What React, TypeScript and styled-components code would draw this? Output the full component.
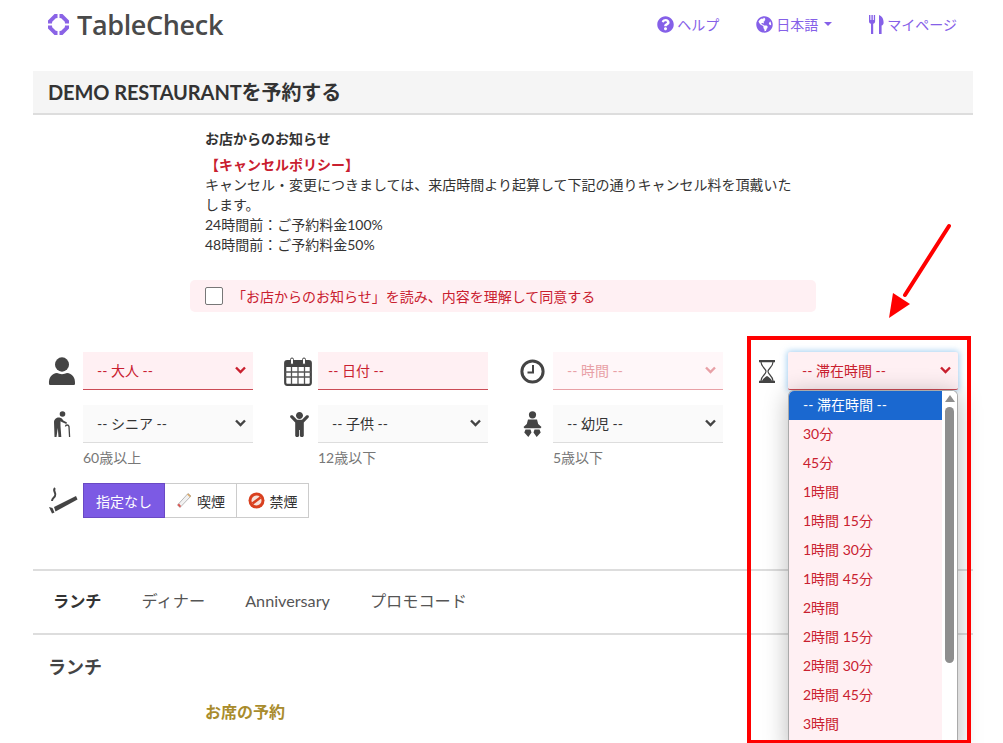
import React from 'react'
import styled, { createGlobalStyle } from 'styled-components'
import { FaQuestionCircle, FaGlobeAmericas, FaChild } from 'react-icons/fa'

const GlobalStyle = createGlobalStyle`
  html, body {
    margin: 0;
    padding: 0;
    height: 743px;
    overflow: hidden;
    background: #fff;
    font-family: Lato, "Noto Sans CJK JP", sans-serif;
    font-size: 14px;
    color: #333;
  }
`

const purple = '#8560e8'
const red = '#c9202f'

const Page = styled.div`
  position: relative;
  width: 1003px;
  height: 743px;
  overflow: hidden;
`

const Header = styled.header`
  display: flex;
  align-items: center;
  justify-content: space-between;
  height: 48px;
  padding: 0 46px 0 47px;
  margin-bottom: 23px;
`

const Logo = styled.div`
  display: flex;
  align-items: center;
  gap: 7px;
  font-family: "Open Sans", sans-serif;
  font-size: 27px;
  font-weight: 600;
  letter-spacing: -0.35px;
  color: #4a4a4a;
`

const Nav = styled.nav`
  display: flex;
  align-items: center;
  gap: 37px;
`

const NavLink = styled.a`
  display: flex;
  align-items: center;
  gap: 3px;
  font-size: 14px;
  color: ${purple};
`

const Caret = styled.span`
  width: 0;
  height: 0;
  margin-left: 3px;
  border-left: 4px solid transparent;
  border-right: 4px solid transparent;
  border-top: 4px solid ${purple};
`

const Main = styled.main`
  margin: 0 30px 0 33px;
`

const Title = styled.h1`
  margin: 0;
  height: 42px;
  padding-left: 15px;
  line-height: 42px;
  font-size: 20px;
  font-weight: 700;
  color: #333;
  background: #f5f5f5;
  border-bottom: 2px solid #ddd;
  letter-spacing: -0.1px;
`

const Notice = styled.section`
  width: 595px;
  margin-left: 172px;
  padding-top: 14px;
  line-height: 20px;
`

const NoticeTitle = styled.div`
  font-weight: 700;
  margin-bottom: 6px;
`

const NoticeRed = styled.div`
  font-weight: 700;
  color: ${red};
`

const Consent = styled.label`
  display: flex;
  align-items: center;
  gap: 9px;
  width: 611px;
  height: 32px;
  margin: 25px 0 0 157px;
  padding-left: 15px;
  background: #fff0f3;
  border-radius: 5px;
  color: ${red};
`

const CheckBox = styled.span`
  width: 16px;
  height: 16px;
  background: #fff;
  border: 1px solid #777;
  border-radius: 2px;
`

const Form = styled.div`
  display: grid;
  grid-template-columns: repeat(4, 205px);
  column-gap: 30px;
  row-gap: 15px;
  margin: 40px 0 0 15px;
`

const Field = styled.div`
  position: relative;
  display: grid;
  grid-template-columns: 35px 170px;
`

const FieldIcon = styled.div<{ $indent?: number }>`
  display: flex;
  align-items: center;
  justify-content: flex-start;
  height: 38px;
  padding-left: ${({ $indent }) => $indent ?? 0}px;
  color: #444;
`

const Select = styled.div<{ $state?: 'error' | 'faded' | 'focus'; $inset?: number }>`
  display: flex;
  align-items: center;
  justify-content: space-between;
  box-sizing: border-box;
  height: 38px;
  padding: 0 7px 2px ${({ $inset }) => $inset ?? 14}px;
  background: ${({ $state }) =>
    $state === 'faded' ? '#fff7f9' : $state ? '#fff0f3' : '#fafafa'};
  border-bottom: 1px solid
    ${({ $state }) =>
      $state === 'faded' ? '#e8a0a6' : $state ? '#cb4b55' : '#ddd'};
  color: ${({ $state }) =>
    $state === 'faded' ? '#e8a0a6' : $state ? red : '#333'};
  box-shadow: ${({ $state }) =>
    $state === 'focus' ? '0 0 6px 1px rgba(102, 175, 233, 0.6)' : 'none'};
  border-radius: ${({ $state }) => ($state === 'focus' ? '2px' : '0')};
`

const Note = styled.div`
  grid-column: 2;
  margin-top: 5px;
  line-height: 20px;
  color: #777;
`

const SmokingRow = styled.div`
  display: flex;
  align-items: center;
  margin: 15px 0 0 15px;
`

const SmokingIcon = styled.div`
  width: 35px;
  height: 35px;
  display: flex;
  align-items: center;
`

const SmokingButton = styled.div<{ $active?: boolean }>`
  display: flex;
  align-items: center;
  justify-content: center;
  gap: 5px;
  box-sizing: border-box;
  height: 35px;
  width: ${({ $active }) => ($active ? '82px' : '73px')};
  margin-left: ${({ $active }) => ($active ? '0' : '-1px')};
  border: 1px solid ${({ $active }) => ($active ? '#6a49c4' : '#ccc')};
  background: ${({ $active }) => ($active ? '#7c5ae4' : '#fff')};
  color: ${({ $active }) => ($active ? '#fff' : '#333')};
  position: relative;
  z-index: ${({ $active }) => ($active ? 1 : 0)};
`

const Tabs = styled.div`
  display: flex;
  align-items: center;
  gap: 40px;
  box-sizing: content-box;
  height: 58px;
  margin-top: 51px;
  padding: 0 0 4px 20px;
  border-top: 2px solid #ddd;
  border-bottom: 2px solid #ddd;
  font-size: 16.2px;
`

const Tab = styled.span<{ $active?: boolean }>`
  font-weight: ${({ $active }) => ($active ? 700 : 400)};
  color: ${({ $active }) => ($active ? '#333' : '#555')};
`

const SectionName = styled.h2`
  margin: 21px 0 0 15px;
  line-height: 22px;
  font-size: 18px;
  font-weight: 700;
  color: #444;
`

const SeatHeading = styled.h3`
  margin: 23px 0 0 172px;
  line-height: 22px;
  font-size: 16px;
  font-weight: 700;
  color: #a98c2d;
`

const Dropdown = styled.div`
  position: absolute;
  top: 38px;
  left: 35px;
  z-index: 5;
  display: flex;
  box-sizing: border-box;
  width: 170px;
  height: 360px;
  overflow: hidden;
  background: #fff;
  border: 1px solid #aaa;
  border-bottom: 0;
  border-radius: 6px 6px 0 0;
  box-shadow: 0 4px 24px rgba(0, 0, 0, 0.28);
`

const OptionList = styled.ul`
  flex: 1;
  margin: 0;
  padding: 0;
  list-style: none;
  background: #fff0f3;
`

const Option = styled.li<{ $selected?: boolean }>`
  height: 29px;
  padding-left: 14px;
  line-height: 28px;
  color: ${({ $selected }) => ($selected ? '#fff' : red)};
  background: ${({ $selected }) => ($selected ? '#1a68d0' : 'transparent')};
`

const ScrollTrack = styled.div`
  display: flex;
  flex-direction: column;
  align-items: center;
  width: 15px;
  padding-top: 4px;
  background: #fff;
`

const ScrollArrow = styled.span`
  width: 0;
  height: 0;
  border-left: 5px solid transparent;
  border-right: 5px solid transparent;
  border-bottom: 7px solid #8e8e8e;
`

const ScrollThumb = styled.div`
  width: 9px;
  height: 256px;
  margin-top: 5px;
  border-radius: 5px;
  background: #8e8e8e;
`

const RedFrame = styled.div`
  position: absolute;
  top: 336px;
  left: 747px;
  z-index: 6;
  box-sizing: border-box;
  width: 224px;
  height: 408px;
  border: 4px solid #f00;
  pointer-events: none;
`

const ArrowOverlay = styled.svg`
  position: absolute;
  top: 220px;
  left: 885px;
  z-index: 6;
`

const Chevron = ({ color }: { color: string }) => (
  <svg width="11" height="8" viewBox="0 0 11 8">
    <path d="M1 1.500l4.500 4.500L10 1.500" fill="none" stroke={color} strokeWidth="2.400" />
  </svg>
)

const LogoMark = () => (
  <svg width="23" height="23" viewBox="0 0 23 23" fill="#8a63e6">
    <path d="M7.500 1L10.500 1V5L8.800 5.200L5.200 8.800L5 10.500H1V7.500Z" />
    <path d="M15.500 1L12.500 1V5L14.200 5.200L17.800 8.800L18 10.500H22V7.500Z" />
    <path d="M7.500 22L10.500 22V18L8.800 17.800L5.200 14.200L5 12.500H1V15.500Z" />
    <path d="M15.500 22L12.500 22V18L14.200 17.800L17.800 14.200L18 12.500H22V15.500Z" />
  </svg>
)

const CutleryIcon = () => (
  <svg width="15" height="19" viewBox="0 0 15 19" fill={purple}>
    <path d="M0 0h1.400v5h1V0h1.400v5h1V0h1.300v6.500c0 1.200-.8 2-1.900 2.300V19H2V8.800C.8 8.500 0 7.700 0 6.500z" />
    <path d="M10 19V0c2.600.8 4.600 3.600 4.600 7.500 0 1.700-.8 2.800-2 3V19z" />
  </svg>
)

const PersonIcon = () => (
  <svg width="28" height="28" viewBox="0 0 28 28" fill="#444">
    <ellipse cx="14" cy="7.500" rx="7" ry="7.200" />
    <path d="M1 27c-.6-6.500 3-10.500 8-11 3 1.500 7 1.500 10 0 5 .5 8.600 4.500 8 11-.1.6-.5 1-1 1H2c-.5 0-.9-.4-1-1z" />
  </svg>
)

const CalendarIcon = () => (
  <svg width="28" height="29" viewBox="0 0 28 29">
    <rect x="1.200" y="4" width="25.600" height="23.800" rx="2" fill="#fff" stroke="#444" strokeWidth="2.200" />
    <rect x="1" y="4" width="26" height="6" fill="#444" />
    <rect x="6.500" y="1" width="3" height="6.500" rx="1.500" fill="#fff" stroke="#444" />
    <rect x="18.500" y="1" width="3" height="6.500" rx="1.500" fill="#fff" stroke="#444" />
    <path d="M1 15h26M1 20h26M7.500 10v17M14 10v17M20.500 10v17" stroke="#555" strokeWidth="1.300" />
  </svg>
)

const ClockIcon = () => (
  <svg width="25" height="25" viewBox="0 0 25 25">
    <circle cx="12.500" cy="12.500" r="10.600" fill="#fff" stroke="#444" strokeWidth="3" />
    <path d="M13 6v7.500H7.500" fill="none" stroke="#444" strokeWidth="2" />
  </svg>
)

const HourglassIcon = () => (
  <svg width="18" height="23" viewBox="0 0 18 23">
    <path d="M1 1.200h16M1 21.800h16" stroke="#444" strokeWidth="2.200" />
    <path d="M3 2c0 5 5 6.500 5 9.500S3 16 3 21M15 2c0 5-5 6.500-5 9.500S15 16 15 21" fill="none" stroke="#444" strokeWidth="1.200" />
    <path d="M4 21c.8-2.500 3.500-4 5-5 1.500 1 4.200 2.500 5 5z" fill="#444" />
  </svg>
)

const SeniorIcon = () => (
  <svg width="19" height="27" viewBox="0 0 19 27" fill="#444">
    <circle cx="9.500" cy="3" r="2.800" />
    <path d="M1 11c0-3 3-5 5.500-4.500 2 .3 3 1.500 3.800 3l3.700 2-.7 1.500-4.500-2-1.300-.8V15l.8 11H5.500l-.7-9-1.300 9H1.500z" />
    <path d="M12.500 15.500c0-2 3-2 3.500 0L16.600 26" fill="none" stroke="#444" strokeWidth="1.300" />
  </svg>
)

const BabyIcon = () => (
  <svg width="19" height="27" viewBox="0 0 19 27" fill="#444">
    <circle cx="9.500" cy="3.800" r="3.600" />
    <path d="M5 8.500h9l1.200 4.500 3.300 3-1 1.300H1.500l-1-1.300 3.300-3z" />
    <path d="M2.500 18.500h5l1 3-3.200 4.500-4-4.500zM16.500 18.500h-5l-1 3 3.200 4.500 4-4.500z" />
  </svg>
)

const CigaretteIcon = () => (
  <svg width="30" height="27" viewBox="0 0 30 27">
    <path d="M7 1c-3 3 2 5 0 8-1 2-3 2-3 5" fill="none" stroke="#444" strokeWidth="2" />
    <path d="M6 20L28 9l1.500 3.500L7.500 24.500z" fill="#444" />
    <path d="M1 20l3.500 1 2 4.500-2.500 1z" fill="#444" />
  </svg>
)

const SmokingEmoji = () => (
  <svg width="16" height="17" viewBox="0 0 16 17">
    <path d="M1.500 13L12 1.500l3 2.500L4 15.500z" fill="#f2f2f2" stroke="#b9b9b9" />
    <path d="M11 2.500l1-1 3 2.500-1 1.200z" fill="#d9a869" />
    <path d="M1.500 13L3 11.500 5 14l-1 1.500z" fill="#d9534f" />
  </svg>
)

const NoEmoji = () => (
  <svg width="17" height="17" viewBox="0 0 17 17">
    <circle cx="8.500" cy="8.500" r="8" fill="#d9401f" />
    <circle cx="8.500" cy="8.500" r="5" fill="#f6e3dc" />
    <path d="M4.500 11.500l8-6" stroke="#d9401f" strokeWidth="2.500" />
  </svg>
)

const durations = [
  '-- 滞在時間 --',
  '30分',
  '45分',
  '1時間',
  '1時間 15分',
  '1時間 30分',
  '1時間 45分',
  '2時間',
  '2時間 15分',
  '2時間 30分',
  '2時間 45分',
  '3時間',
]

export default function App() {
  return (
    <Page>
      <GlobalStyle />
      <Header>
        <Logo>
          <LogoMark />
          TableCheck
        </Logo>
        <Nav>
          <NavLink>
            <FaQuestionCircle size={17} />
            ヘルプ
          </NavLink>
          <NavLink>
            <FaGlobeAmericas size={17} />
            日本語
            <Caret />
          </NavLink>
          <NavLink>
            <CutleryIcon />
            マイページ
          </NavLink>
        </Nav>
      </Header>

      <Main>
        <Title>DEMO RESTAURANTを予約する</Title>
        <Notice>
          <NoticeTitle>お店からのお知らせ</NoticeTitle>
          <NoticeRed>【キャンセルポリシー】</NoticeRed>
          キャンセル・変更につきましては、来店時間より起算して下記の通りキャンセル料を頂戴いたします。
          <br />
          24時間前：ご予約料金100%
          <br />
          48時間前：ご予約料金50%
        </Notice>
        <Consent>
          <CheckBox />
          「お店からのお知らせ」を読み、内容を理解して同意する
        </Consent>

        <Form>
          <Field>
            <FieldIcon><PersonIcon /></FieldIcon>
            <Select $state="error">-- 大人 --<Chevron color={red} /></Select>
          </Field>
          <Field>
            <FieldIcon $indent={1}><CalendarIcon /></FieldIcon>
            <Select $state="error" $inset={10}>-- 日付 --</Select>
          </Field>
          <Field>
            <FieldIcon $indent={2}><ClockIcon /></FieldIcon>
            <Select $state="faded">-- 時間 --<Chevron color="#e8a0a6" /></Select>
          </Field>
          <Field>
            <FieldIcon $indent={5}><HourglassIcon /></FieldIcon>
            <Select $state="focus">-- 滞在時間 --<Chevron color={red} /></Select>
            <Dropdown>
              <OptionList>
                {durations.map((label, i) => (
                  <Option key={label} $selected={i === 0}>{label}</Option>
                ))}
              </OptionList>
              <ScrollTrack>
                <ScrollArrow />
                <ScrollThumb />
              </ScrollTrack>
            </Dropdown>
          </Field>
          <Field>
            <FieldIcon $indent={5}><SeniorIcon /></FieldIcon>
            <Select>-- シニア --<Chevron color="#444" /></Select>
            <Note>60歳以上</Note>
          </Field>
          <Field>
            <FieldIcon $indent={4}><FaChild size={25} /></FieldIcon>
            <Select>-- 子供 --<Chevron color="#444" /></Select>
            <Note>12歳以下</Note>
          </Field>
          <Field>
            <FieldIcon $indent={5}><BabyIcon /></FieldIcon>
            <Select>-- 幼児 --<Chevron color="#444" /></Select>
            <Note>5歳以下</Note>
          </Field>
        </Form>

        <SmokingRow>
          <SmokingIcon><CigaretteIcon /></SmokingIcon>
          <SmokingButton $active>指定なし</SmokingButton>
          <SmokingButton><SmokingEmoji />喫煙</SmokingButton>
          <SmokingButton><NoEmoji />禁煙</SmokingButton>
        </SmokingRow>

        <Tabs>
          <Tab $active>ランチ</Tab>
          <Tab>ディナー</Tab>
          <Tab>Anniversary</Tab>
          <Tab>プロモコード</Tab>
        </Tabs>
        <SectionName>ランチ</SectionName>
        <SeatHeading>お席の予約</SeatHeading>
      </Main>

      <RedFrame />
      <ArrowOverlay width="70" height="100" viewBox="0 0 70 100">
        <path d="M64 6L20 75" stroke="#f00" strokeWidth="4" strokeLinecap="round" fill="none" />
        <path d="M4 98L8 73 25 84z" fill="#f00" />
      </ArrowOverlay>
    </Page>
  )
}
